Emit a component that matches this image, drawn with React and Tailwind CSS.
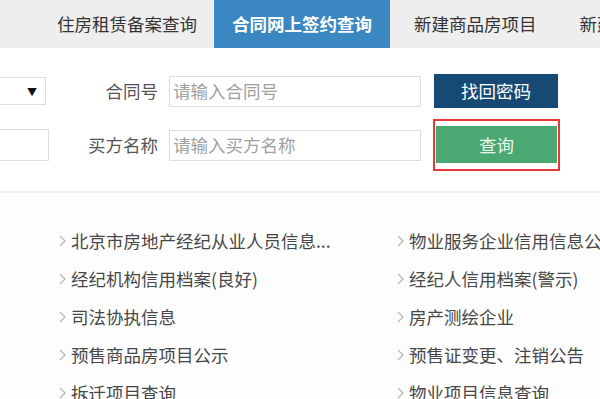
import React from "react";

const font = { fontFamily: '"Noto Sans CJK SC", "Noto Sans", sans-serif' };

function Chevron() {
  return (
    <svg width="7" height="12" viewBox="0 0 7 12" className="shrink-0">
      <polyline points="1,1 6,6 1,11" fill="none" stroke="#b5b9b5" strokeWidth="1.3" />
    </svg>
  );
}

const left = [
  "北京市房地产经纪从业人员信息...",
  "经纪机构信用档案(良好)",
  "司法协执信息",
  "预售商品房项目公示",
  "拆迁项目查询",
];
const right = [
  "物业服务企业信用信息公示",
  "经纪人信用档案(警示)",
  "房产测绘企业",
  "预售证变更、注销公告",
  "物业项目信息查询",
];

function Item({ text }) {
  return (
    <div className="h-[38px] flex items-center whitespace-nowrap">
      <div className="w-[12px] shrink-0 flex items-center">
        <Chevron />
      </div>
      <span className="text-[17.5px] text-[#474747] leading-none">{text}</span>
    </div>
  );
}

export default function App() {
  return (
    <div className="w-[600px] h-[399px] overflow-hidden bg-white" style={font}>
      {/* Tabs */}
      <div className="h-[48px] bg-[#eeeeee] flex items-stretch whitespace-nowrap text-[17.5px] overflow-hidden">
        <div className="shrink-0 pl-[57px] pr-[17px] flex items-center text-[#333]">住房租赁备案查询</div>
        <div className="shrink-0 w-[176px] flex items-center justify-center bg-[#3a87c1] text-white font-bold">合同网上签约查询</div>
        <div className="shrink-0 pl-[24px] pr-[43px] flex items-center text-[#333]">新建商品房项目</div>
        <div className="shrink-0 flex items-center text-[#333]">新建商品房</div>
      </div>

      {/* Form row 1 */}
      <div className="mt-[26px] h-[34px] flex items-center">
        <div className="shrink-0 ml-[-14px] w-[60px] h-[28px] border border-[#dddddd] flex items-center justify-end pr-[8px] text-[10px] text-[#111]">▼</div>
        <div className="shrink-0 w-[112px] text-right text-[17.5px] text-[#555] leading-none">合同号</div>
        <div className="shrink-0 ml-[11px] w-[252px] h-[31px] border border-[#dddddd] flex items-center pl-[3px] text-[17.5px] text-[#a0a0a0] leading-none">请输入合同号</div>
        <div className="shrink-0 ml-[13px] w-[124px] h-[34px] bg-[#164a74] flex items-center justify-center text-white text-[17.5px] leading-none">找回密码</div>
      </div>

      {/* Form row 2 */}
      <div className="mt-[11px] h-[52px] flex items-center">
        <div className="shrink-0 ml-[-14px] w-[63px] h-[32px] border border-[#dddddd]"></div>
        <div className="shrink-0 w-[109px] text-right text-[17.5px] text-[#555] leading-none">买方名称</div>
        <div className="shrink-0 ml-[11px] w-[252px] h-[31px] border border-[#dddddd] flex items-center pl-[3px] text-[17.5px] text-[#a0a0a0] leading-none">请输入买方名称</div>
        <div className="shrink-0 ml-[12px] w-[127px] h-[52px] border-2 border-[#e8393a] pt-[5px] pb-[6px] px-[1px] bg-white">
          <div className="h-full bg-[#4aa972] flex items-center justify-center text-[#eaf7ec] text-[17.5px] leading-none">查询</div>
        </div>
      </div>

      {/* Separator */}
      <div className="mt-[20px] h-[2px] bg-[#eeeeee]"></div>

      {/* Lists */}
      <div className="pt-[29px] flex bg-[#fdfdfd]">
        <div className="shrink-0 pl-[59px] w-[396px] flex flex-col">
          {left.map((t) => (
            <Item key={t} text={t} />
          ))}
        </div>
        <div className="shrink-0 pl-[1px] flex flex-col">
          {right.map((t) => (
            <Item key={t} text={t} />
          ))}
        </div>
      </div>
    </div>
  );
}
